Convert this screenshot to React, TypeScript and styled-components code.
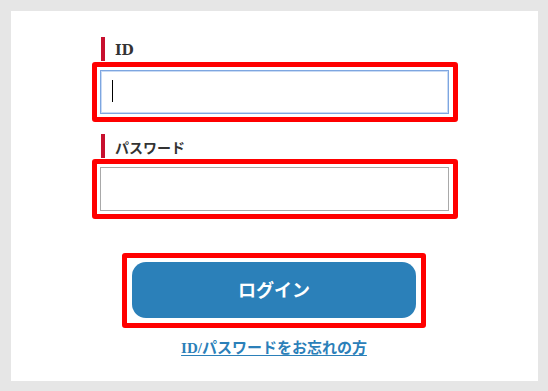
import React from "react";
import styled, { createGlobalStyle } from "styled-components";

const Global = createGlobalStyle`
  html, body { margin: 0; padding: 0; background: #e6e6e6; }
  body { font-family: "Liberation Serif", "Noto Sans CJK JP", serif; }
  * { box-sizing: border-box; }
`;

const Frame = styled.div`
  width: 548px;
  height: 391px;
  padding: 11px 10px 10px 11px;
  background: #e6e6e6;
`;

const Panel = styled.div`
  height: 100%;
  background: #ffffff;
  padding: 26px 80px 0 81px;
  display: flex;
  flex-direction: column;
`;

const Field = styled.div`
  display: flex;
  flex-direction: column;
  gap: 1px;
  & + & { margin-top: 12px; }
`;

const Label = styled.div`
  height: 24px;
  border-left: 4px solid #c8102e;
  margin-left: 9px;
  padding-left: 10px;
  display: flex;
  align-items: center;
  padding-top: 1px;
  font-size: 14px;
  font-weight: bold;
  color: #333333;
  font-family: "DejaVu Serif", "Noto Sans CJK JP", serif;
`;

const Highlight = styled.div<{ $pad: string }>`
  border: 5px solid #ff0000;
  border-radius: 3px;
  padding: ${(p) => p.$pad};
  align-self: flex-start;
`;

const InputBox = styled.div<{ $focused?: boolean }>`
  position: relative;
  width: 349px;
  height: 44px;
  background: #ffffff;
  border: 1px solid ${(p) => (p.$focused ? "#7ea6e0" : "#a9a9a9")};
  box-shadow: ${(p) => (p.$focused ? "inset 0 0 0 1px #c9dbf5" : "none")};
`;

const Caret = styled.span`
  position: absolute;
  left: 11px;
  top: 9px;
  width: 1px;
  height: 22px;
  background: #000000;
`;

const ButtonArea = styled.div`
  margin-top: 34px;
  display: flex;
  justify-content: center;
  padding-right: 2px;
`;

const LoginButton = styled.button`
  width: 284px;
  height: 56px;
  border: none;
  border-radius: 14px;
  background: #2b80b9;
  color: #ffffff;
  font-family: "Noto Sans CJK JP", sans-serif;
  font-weight: bold;
  font-size: 18px;
  display: flex;
  align-items: center;
  justify-content: center;
  padding: 0 0 3px;
  cursor: pointer;
`;

const LinkRow = styled.div`
  margin-top: 10px;
  display: flex;
  justify-content: center;
  padding-right: 2px;
`;

const ForgotLink = styled.a`
  color: #2b80b9;
  font-weight: bold;
  font-size: 15px;
  font-family: "Liberation Serif", "Noto Sans CJK JP", serif;
  text-decoration: underline;
  text-underline-offset: 2px;
  line-height: 20px;
`;

export default function App() {
  return (
    <>
      <Global />
      <Frame>
        <Panel>
          <Field>
            <Label>ID</Label>
            <Highlight $pad="3px 4px 3px 3px">
              <InputBox $focused>
                <Caret />
              </InputBox>
            </Highlight>
          </Field>
          <Field>
            <Label>パスワード</Label>
            <Highlight $pad="3px 4px 3px 3px">
              <InputBox />
            </Highlight>
          </Field>
          <ButtonArea>
            <Highlight $pad="4px 5px 5px 5px">
              <LoginButton>ログイン</LoginButton>
            </Highlight>
          </ButtonArea>
          <LinkRow>
            <ForgotLink href="#">ID/パスワードをお忘れの方</ForgotLink>
          </LinkRow>
        </Panel>
      </Frame>
    </>
  );
}
